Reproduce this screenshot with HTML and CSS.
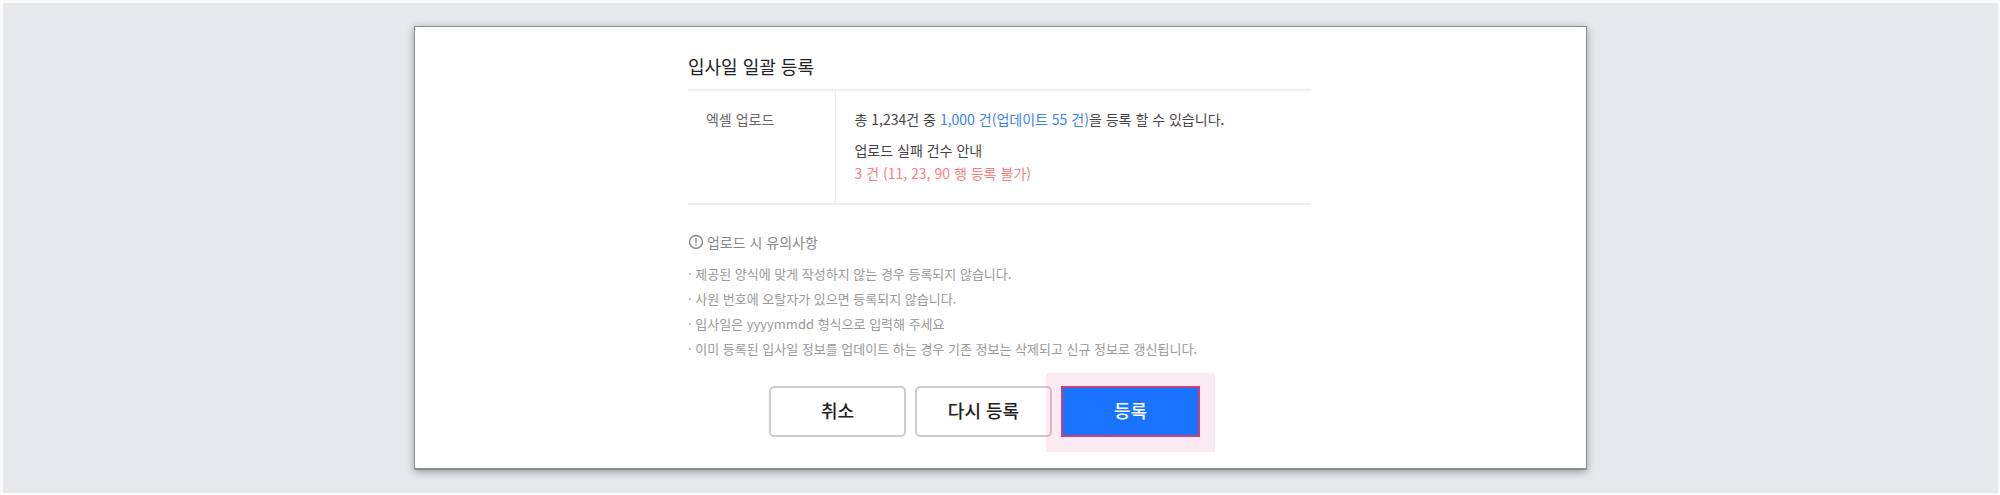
FILE: index.html
```html
<!DOCTYPE html>
<html lang="ko">

<head>
    <meta charset="utf-8">
    <title>입사일 일괄 등록</title>
    <link rel="stylesheet" href="styles.css">
</head>

<body>
    <main class="dialog">
        <div class="content">
            <h2 class="title">입사일 일괄 등록</h2>
            <table class="result">
                <tr>
                    <th scope="row">엑셀 업로드</th>
                    <td>
                        <p class="total">총 1,234건 중 <span class="blue">1,000 건(업데이트 55 건)</span>을 등록 할 수 있습니다.</p>
                        <p>업로드 실패 건수 안내</p>
                        <p class="fail">3 건 (11, 23, 90 행 등록 불가)</p>
                    </td>
                </tr>
            </table>
            <h3 class="notice-title">
                <svg class="icon" viewBox="0 0 16 16" width="16" height="16" aria-hidden="true">
                    <circle cx="8" cy="8" r="6.5" />
                    <path d="M8 4V9M8 10V11.4" />
                </svg>
                업로드 시 유의사항
            </h3>
            <ul class="notice">
                <li>· 제공된 양식에 맞게 작성하지 않는 경우 등록되지 않습니다.</li>
                <li>· 사원 번호에 오탈자가 있으면 등록되지 않습니다.</li>
                <li>· 입사일은 yyyymmdd 형식으로 입력해 주세요</li>
                <li>· 이미 등록된 입사일 정보를 업데이트 하는 경우 기존 정보는 삭제되고 신규 정보로 갱신됩니다.</li>
            </ul>
            <div class="buttons">
                <button type="button">취소</button>
                <button type="button">다시 등록</button>
                <div class="highlight">
                    <button type="button" class="submit">등록</button>
                </div>
            </div>
        </div>
    </main>
</body>

</html>
```
FILE: styles.css
```css
* {
    box-sizing: border-box;
}

body {
    margin: 0;
    padding: 23px 0;
    min-height: 100vh;
    border: 3px solid #fafafa;
    border-width: 3px 2px 2px 3px;
    background-color: #e7e9ed;
    font-family: "Noto Sans CJK KR", "Noto Sans", sans-serif;
    font-size: 14px;
    color: #444;
}

h2,
h3,
p,
ul {
    margin: 0;
    padding: 0;
}

.dialog {
    width: 58.8%;
    margin: 0 auto;
    padding: 25px 26px 31px 24px;
    border: 1px solid #8e8e8e;
    border-bottom-width: 2px;
    background-color: #fff;
    box-shadow: 0 2px 8px rgba(0, 0, 0, 0.35);
}

.content {
    max-width: 623px;
    margin: 0 auto;
}

.title {
    padding-bottom: 9px;
    font-size: 18px;
    line-height: 28px;
    font-weight: 400;
    color: #222;
}

.result {
    width: 100%;
    border-collapse: collapse;
    border-top: 2px solid #eee;
    border-bottom: 2px solid #eee;
    line-height: 23px;
}

.result th {
    width: 148px;
    padding: 17px 18px;
    border-right: 1px solid #eee;
    font-weight: 400;
    text-align: left;
    vertical-align: top;
    color: #666;
}

.result td {
    padding: 17px 18px 18px;
}

.total {
    margin-bottom: 8px;
}

.blue {
    color: #3b82f6;
}

.fail {
    color: #fb7f80;
}

.notice-title {
    display: flex;
    align-items: center;
    gap: 3px;
    margin: 24px 0 6px;
    font-size: 14px;
    line-height: 26px;
    font-weight: 400;
    color: #888;
}

.icon {
    fill: none;
    stroke: #888;
    stroke-width: 1.4;
}

.notice {
    list-style: none;
    font-size: 13px;
    line-height: 25px;
    color: #999;
}

.buttons {
    display: flex;
    justify-content: center;
    gap: 9px;
    margin: 25px 30px 0 0;
}

button {
    width: 137px;
    height: 51px;
    padding: 0 0 3px;
    border: 2px solid #ccc;
    border-radius: 5px;
    background-color: #fff;
    font-family: inherit;
    font-size: 18px;
    font-weight: 500;
    color: #222;
}

.highlight {
    position: relative;
}

/* pink area around the submit button */
.highlight::before {
    content: "";
    position: absolute;
    inset: -13px -15px -15px;
    background-color: rgba(216, 27, 96, 0.09);
}

.submit {
    position: relative;
    width: 139px;
    border: 2px solid #c9407c;
    border-radius: 0;
    background-color: #1a73ff;
    color: #fff;
}
```
